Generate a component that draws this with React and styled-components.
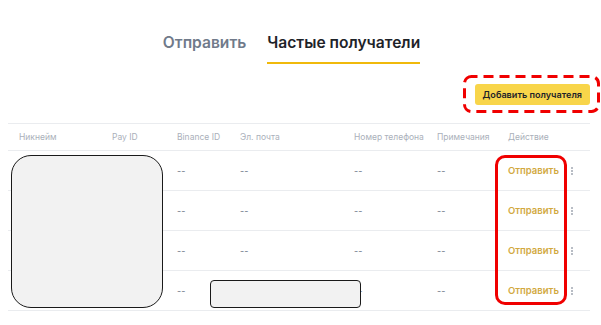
import React from 'react';
import styled, {createGlobalStyle} from 'styled-components';

const GlobalStyle = createGlobalStyle`
    body {
        margin: 0;
        background: #ffffff;
        font-family: Inter, "Noto Sans", sans-serif;
    }
`;

const Page = styled.div`
    position: relative;
    width: 601px;
    height: 325px;
    overflow: hidden;
`;

const Tabs = styled.div`
    display: flex;
    justify-content: center;
    gap: 21px;
    padding: 33px 18px 0 0;
`;

const Tab = styled.div`
    font-size: 15.6px;
    line-height: 20px;
    font-weight: 600;
    color: ${p => (p.active ? '#1e2329' : '#707a8a')};
    padding-bottom: 9px;
    border-bottom: 2px solid ${p => (p.active ? '#f0b90b' : 'transparent')};
`;

const Toolbar = styled.div`
    display: flex;
    justify-content: flex-end;
    padding: 20px 11px 0 0;
`;

const AddButton = styled.button`
    height: 21px;
    padding: 0 8px;
    border: none;
    border-radius: 3px;
    background: #f8d54a;
    color: #1e2329;
    font-family: inherit;
    font-size: 9.1px;
    font-weight: 600;
`;

const Table = styled.div`
    margin: 18px 11px 0 8px;
    border-top: 1px solid #eaecef;
`;

const Row = styled.div`
    display: grid;
    grid-template-columns: 93px 65px 63px 114px 83px 71px 58px 1fr;
    align-items: center;
    height: ${p => (p.head ? '26px' : '39px')};
    padding-left: 11px;
    border-bottom: 1px solid #eaecef;
`;

const HeadCell = styled.div`
    font-size: 8.5px;
    color: #aab0ba;
    white-space: nowrap;
`;

const Cell = styled.div`
    font-size: 9px;
    color: #707a8a;
`;

const SendLink = styled.div`
    font-size: 9.5px;
    font-weight: 600;
    color: #d2a93f;
`;

const Dots = styled.div`
    display: flex;
    flex-direction: column;
    gap: 1px;
    padding-left: 5px;
    span {
        width: 2px;
        height: 2px;
        border-radius: 1px;
        background: #a0a7b2;
    }
`;

const Mask = styled.div`
    position: absolute;
    box-sizing: border-box;
    background: #f2f2f2;
    border: 1px solid #1a1a1a;
`;

const Highlight = styled.div`
    position: absolute;
    box-sizing: border-box;
    border: 3px solid #f00000;
    border-radius: 10px;
`;

const DashedFrame = styled.svg`
    position: absolute;
    overflow: visible;
`;

const headers = ['Никнейм', 'Pay ID', 'Binance ID', 'Эл. почта', 'Номер телефона', 'Примечания', 'Действие'];

export default function App() {
    return (
        <Page>
            <GlobalStyle />
            <Tabs>
                <Tab>Отправить</Tab>
                <Tab active>Частые получатели</Tab>
            </Tabs>
            <Toolbar>
                <AddButton>Добавить получателя</AddButton>
            </Toolbar>
            <Table>
                <Row head>
                    {headers.map(h => <HeadCell key={h}>{h}</HeadCell>)}
                    <div />
                </Row>
                {[0, 1, 2, 3].map(i => (
                    <Row key={i}>
                        <Cell />
                        <Cell />
                        <Cell>--</Cell>
                        <Cell>--</Cell>
                        <Cell>--</Cell>
                        <Cell>--</Cell>
                        <SendLink>Отправить</SendLink>
                        <Dots><span /><span /><span /></Dots>
                    </Row>
                ))}
            </Table>
            <Mask style={{left: 11, top: 155, width: 152, height: 153, borderRadius: 20}} />
            <Mask style={{left: 210, top: 280, width: 151, height: 28, borderRadius: 4}} />
            <DashedFrame width="137" height="38" style={{left: 463, top: 75}}>
                <rect x="1.5" y="1.5" width="134" height="35" rx="7"
                    fill="none" stroke="#f00000" strokeWidth="3" strokeDasharray="10 6" strokeDashoffset="4" />
            </DashedFrame>
            <Highlight style={{left: 495, top: 155, width: 72, height: 150}} />
        </Page>
    );
}
